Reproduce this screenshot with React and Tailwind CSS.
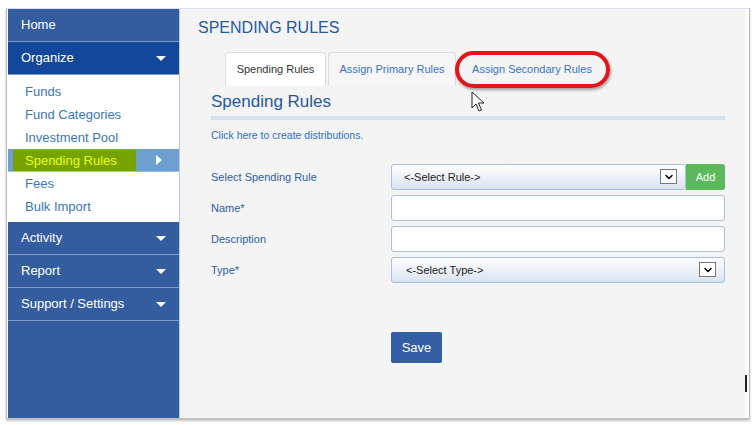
import { ChevronDown } from 'lucide-react';

const font = { fontFamily: '"Liberation Sans", Arial, sans-serif' };

function Caret() {
  return (
    <span className="w-0 h-0 border-l-[5px] border-r-[5px] border-t-[5px] border-l-transparent border-r-transparent border-t-white" />
  );
}

function NavHeader({ label, dark, caret }) {
  return (
    <div
      className={`h-[33px] flex items-center justify-between pl-[13px] pr-[13px] text-[13px] text-white border-b border-[#7d9ccc] ${
        dark ? 'bg-[#12479b]' : 'bg-[#345da0]'
      }`}
    >
      <span>{label}</span>
      {caret && <Caret />}
    </div>
  );
}

function SubItem({ label }) {
  return <div className="h-[23px] leading-[23px] pl-[17px] text-[13px] text-[#3b76bd]">{label}</div>;
}

function SelectBox({ label, pad }) {
  return (
    <div className="flex-1 h-[26px] flex items-center justify-between border border-[#a9bfdc] rounded-[3px] bg-gradient-to-b from-white to-[#d9e3f1]">
      <span className={`text-[11px] text-[#222] ${pad}`}>{label}</span>
      <span className="w-[17px] h-[15px] mr-[8px] bg-white border border-[#777] flex items-center justify-center">
        <ChevronDown className="w-[12px] h-[12px] text-black" strokeWidth={3} />
      </span>
    </div>
  );
}

function Row({ label, children }) {
  return (
    <div className="flex items-center">
      <div className="w-[180px] text-[11px] text-[#2c5ea8]">{label}</div>
      <div className="w-[334px] flex">{children}</div>
    </div>
  );
}

export default function App() {
  return (
    <div className="w-[754px] h-[425px] bg-white relative overflow-hidden" style={font}>
      {/* Window frame */}
      <div className="absolute left-[6px] top-[8px] w-[744px] h-[411px] border-l border-r border-b border-[#bdbdbd] shadow-[0_2px_2px_rgba(0,0,0,0.25)] bg-white flex flex-col">
        <div className="h-[1px] bg-[#d8e1ec]" />
        <div className="flex flex-1 min-h-0 pl-[1px] pr-[4px]">
          {/* Sidebar */}
          <div className="w-[172px] flex flex-col bg-[#345da0] border-r border-[#b9c9e2]">
            <NavHeader label="Home" />
            <NavHeader label="Organize" dark caret />
            <div className="bg-white pt-[5px] pb-[4px]">
              <SubItem label="Funds" />
              <SubItem label="Fund Categories" />
              <SubItem label="Investment Pool" />
              <div className="h-[23px] bg-[#6d9fd0] flex items-center justify-between pl-[5px] pr-[17px] border-b border-[#9dbbe0]">
                <span className="h-[21px] w-[123px] bg-[#76a300] text-[#eaff00] text-[13px] leading-[21px] pl-[12px]">
                  Spending Rules
                </span>
                <span className="w-0 h-0 border-t-[5px] border-b-[5px] border-l-[6px] border-t-transparent border-b-transparent border-l-white" />
              </div>
              <SubItem label="Fees" />
              <SubItem label="Bulk Import" />
            </div>
            <NavHeader label="Activity" caret />
            <NavHeader label="Report" caret />
            <NavHeader label="Support / Settings" caret />
            <div className="flex-1 bg-[#345da0]" />
          </div>

          {/* Content */}
          <div className="flex-1 bg-[#f4f4f4] pl-[18px] pt-[9px]">
            <h1 className="text-[16px] text-[#2458a6] leading-[20px]">SPENDING RULES</h1>

            <div className="ml-[27px] mt-[14px] flex h-[34px] items-stretch">
              <div className="w-[101px] bg-white border border-b-0 border-[#dcdcdc] rounded-t-[4px] flex items-center justify-center text-[11px] text-[#333]">
                Spending Rules
              </div>
              <div className="ml-[2px] w-[128px] bg-[#f6f6f6] border border-b-0 border-[#dcdcdc] rounded-t-[4px] flex items-center justify-center text-[11px] text-[#3a73c6]">
                Assign Primary Rules
              </div>
              <div className="ml-[2px] w-[152px] relative flex items-center justify-center pr-[4px] text-[11px] text-[#3a73c6]">
                Assign Secondary Rules
                <div className="absolute left-[-3px] top-[-1px] w-[155px] h-[37px] rounded-full border-[4px] border-[#e4141b] shadow-[1px_2px_3px_rgba(0,0,0,0.35)]" />
              </div>
            </div>

            <div className="ml-[13px] w-[514px]">
              <h2 className="mt-[6px] text-[17px] text-[#2458a6] leading-[20px]">Spending Rules</h2>
              <div className="mt-[4px] h-[4px] bg-[#d5e1f0]" />
              <div className="mt-[8px] text-[10.5px] text-[#2f6fc4]">Click here to create distributions.</div>

              <div className="mt-[20px] flex flex-col gap-[5px]">
                <Row label="Select Spending Rule">
                  <SelectBox label="<-Select Rule->" pad="pl-[12px]" />
                  <div className="w-[39px] h-[26px] bg-[#5cb85c] rounded-r-[3px] flex items-center justify-center text-[11px] text-white">
                    Add
                  </div>
                </Row>
                <Row label="Name*">
                  <div className="flex-1 h-[26px] bg-white border border-[#a9bfdc] rounded-[3px]" />
                </Row>
                <Row label="Description">
                  <div className="flex-1 h-[26px] bg-white border border-[#a9bfdc] rounded-[3px]" />
                </Row>
                <Row label="Type*">
                  <SelectBox label="<-Select Type->" pad="pl-[14px]" />
                </Row>
              </div>

              <div className="mt-[49px] ml-[180px] w-[51px] h-[31px] bg-[#335ea3] rounded-[2px] flex items-center justify-center text-[13px] text-white">
                Save
              </div>
            </div>
          </div>
        </div>
      </div>

      {/* Mouse pointer */}
      <svg className="absolute left-[471px] top-[91px]" width="14" height="22" viewBox="0 0 14 22">
        <path d="M1 1 L1 17 L5 13 L8 20 L10.5 19 L7.5 12 L13 12 Z" fill="white" stroke="#222" strokeWidth="1" strokeLinejoin="round" />
      </svg>

      {/* Text caret */}
      <div className="absolute left-[745px] top-[375px] w-[2px] h-[17px] bg-[#222]" />
    </div>
  );
}
